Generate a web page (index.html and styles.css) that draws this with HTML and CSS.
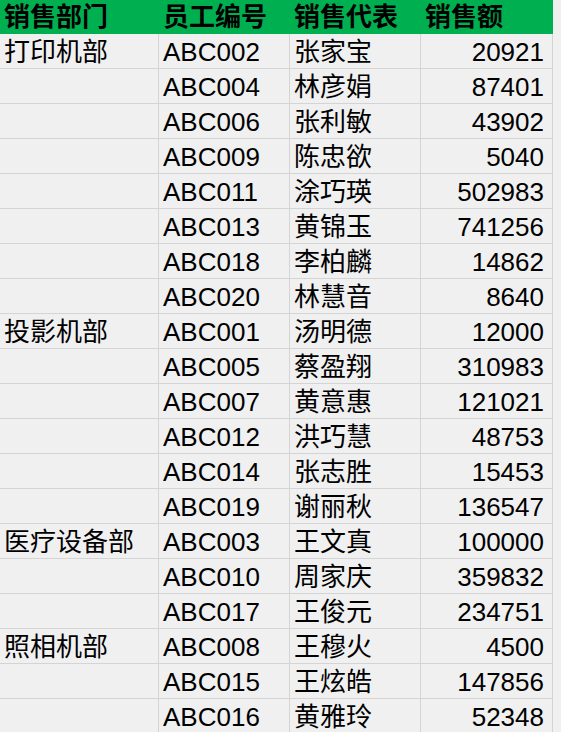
FILE: index.html
```html
<!DOCTYPE html>
<html lang="zh">
<head>
<meta charset="utf-8">
<title>销售表</title>
<link rel="stylesheet" href="styles.css">
</head>
<body>
<div class="sheet">
  <div class="hd">销售部门</div><div class="hd">员工编号</div><div class="hd">销售代表</div><div class="hd">销售额</div>
  <div class="c">打印机部</div><div class="c">ABC002</div><div class="c">张家宝</div><div class="c n">20921</div>
  <div class="c"></div><div class="c">ABC004</div><div class="c">林彦娟</div><div class="c n">87401</div>
  <div class="c"></div><div class="c">ABC006</div><div class="c">张利敏</div><div class="c n">43902</div>
  <div class="c"></div><div class="c">ABC009</div><div class="c">陈忠欲</div><div class="c n">5040</div>
  <div class="c"></div><div class="c">ABC011</div><div class="c">涂巧瑛</div><div class="c n">502983</div>
  <div class="c"></div><div class="c">ABC013</div><div class="c">黄锦玉</div><div class="c n">741256</div>
  <div class="c"></div><div class="c">ABC018</div><div class="c">李柏麟</div><div class="c n">14862</div>
  <div class="c"></div><div class="c">ABC020</div><div class="c">林慧音</div><div class="c n">8640</div>
  <div class="c">投影机部</div><div class="c">ABC001</div><div class="c">汤明德</div><div class="c n">12000</div>
  <div class="c"></div><div class="c">ABC005</div><div class="c">蔡盈翔</div><div class="c n">310983</div>
  <div class="c"></div><div class="c">ABC007</div><div class="c">黄意惠</div><div class="c n">121021</div>
  <div class="c"></div><div class="c">ABC012</div><div class="c">洪巧慧</div><div class="c n">48753</div>
  <div class="c"></div><div class="c">ABC014</div><div class="c">张志胜</div><div class="c n">15453</div>
  <div class="c"></div><div class="c">ABC019</div><div class="c">谢丽秋</div><div class="c n">136547</div>
  <div class="c">医疗设备部</div><div class="c">ABC003</div><div class="c">王文真</div><div class="c n">100000</div>
  <div class="c"></div><div class="c">ABC010</div><div class="c">周家庆</div><div class="c n">359832</div>
  <div class="c"></div><div class="c">ABC017</div><div class="c">王俊元</div><div class="c n">234751</div>
  <div class="c">照相机部</div><div class="c">ABC008</div><div class="c">王穆火</div><div class="c n">4500</div>
  <div class="c"></div><div class="c">ABC015</div><div class="c">王炫皓</div><div class="c n">147856</div>
  <div class="c"></div><div class="c">ABC016</div><div class="c">黄雅玲</div><div class="c n">52348</div>
</div>
</body>
</html>
```

FILE: styles.css
```css
html, body {
  margin: 0;
  padding: 0;
  background: #f0f0f0;
}
body {
  font-family: "Liberation Sans", "Noto Sans CJK SC", sans-serif;
  font-size: 26px;
  color: #000;
  overflow: hidden;
}
.sheet {
  display: grid;
  grid-template-columns: 159px 131px 131px 132px;
  grid-auto-rows: 35px;
  grid-template-rows: 34px;
  width: 553px;
}
.hd {
  background: #00b050;
  font-weight: bold;
  display: flex;
  align-items: center;
  padding: 0 0 0 4px;
  line-height: 34px;
  white-space: nowrap;
}
.c {
  box-sizing: border-box;
  border-right: 1px solid #d4d4d4;
  border-bottom: 1px solid #d4d4d4;
  display: flex;
  align-items: center;
  padding: 1px 0 0 4px;
  line-height: 34px;
  white-space: nowrap;
}
.n {
  justify-content: flex-end;
  padding: 1px 8px 0 0;
}
```
